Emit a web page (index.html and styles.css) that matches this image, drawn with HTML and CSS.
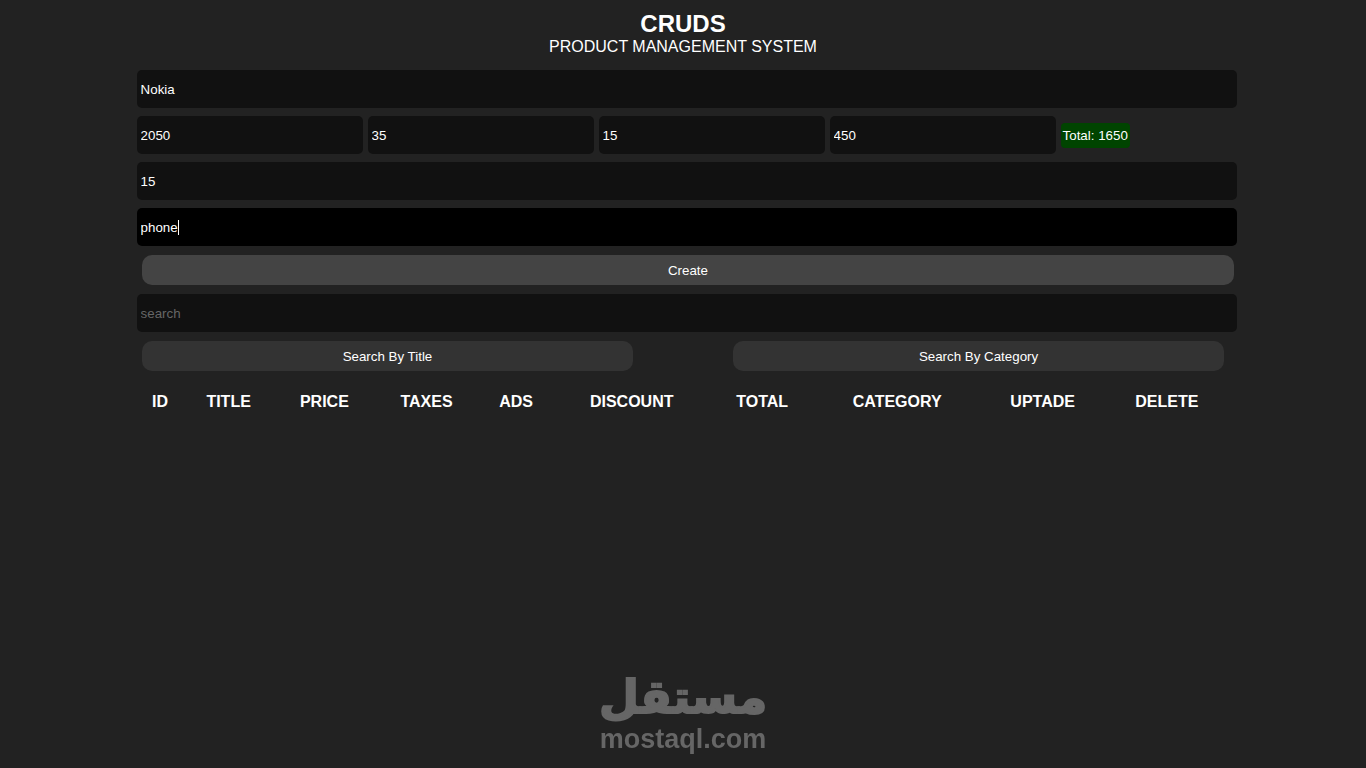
FILE: index.html
```html
<!DOCTYPE html>
<html lang="en">
<head>
    <meta charset="UTF-8">
    <meta name="viewport" content="width=device-width, initial-scale=1.0">
    <title>CRUDS</title>
    <link rel="stylesheet" href="styles.css">
</head>
<body>
    <div class="crud">
        <header class="head">
            <h1>CRUDS</h1>
            <p>PRODUCT MANAGEMENT SYSTEM</p>
        </header>

        <div class="inputs">
            <input type="text" id="title" placeholder="title" aria-label="title" value="Nokia">
            <div class="price">
                <input type="text" inputmode="numeric" id="price" placeholder="price" aria-label="price" value="2050">
                <input type="text" inputmode="numeric" id="taxes" placeholder="taxes" aria-label="taxes" value="35">
                <input type="text" inputmode="numeric" id="ads" placeholder="ads" aria-label="ads" value="15">
                <input type="text" inputmode="numeric" id="discount" placeholder="discount" aria-label="discount" value="450">
                <small id="total">Total: 1650</small>
            </div>
            <input type="text" inputmode="numeric" id="count" placeholder="count" aria-label="count" value="15">
            <input type="text" class="caret" id="category" placeholder="category" aria-label="category" value="phone">
            <button class="create" id="submit">Create</button>
        </div>

        <div class="outputs">
            <input type="text" id="search" placeholder="search" aria-label="search">
            <div class="btn-search">
                <button id="searchTitle">Search By Title</button>
                <button id="searchCategory">Search By Category</button>
            </div>
            <table>
                <thead>
                    <tr>
                        <th>ID</th>
                        <th>TITLE</th>
                        <th>PRICE</th>
                        <th>TAXES</th>
                        <th>ADS</th>
                        <th>DISCOUNT</th>
                        <th>TOTAL</th>
                        <th>CATEGORY</th>
                        <th>UPTADE</th>
                        <th>DELETE</th>
                    </tr>
                </thead>
                <tbody id="tbody"></tbody>
            </table>
        </div>
    </div>

    <div class="watermark">
        <span class="watermark-ar" lang="ar" dir="rtl">مستقل</span>
        <span class="watermark-en">mostaql.com</span>
    </div>

    <script>
        let category = document.getElementById('category');
        category.focus();
        category.setSelectionRange(category.value.length, category.value.length);

        // back to the normal caret once the user types
        category.addEventListener('input', function() {
            category.classList.remove('caret');
        });
    </script>
</body>
</html>
```
FILE: styles.css
```css
body {
    margin: 0;
    background: #222;
    color: #fff;
    font-family: "Liberation Sans", Arial, sans-serif;
}

.crud {
    width: 80%;
    margin: 0 auto;
}

.head {
    padding: 10px 0 6px;
    text-align: center;
}

.head h1 {
    margin: 0;
    font-size: 24px;
    line-height: 28px;
}

.head p {
    margin: 0;
    line-height: 18px;
}

input {
    width: 100%;
    height: 30px;
    margin: 8px 0;
    padding: 4px;
    border: none;
    outline: none;
    border-radius: 5px;
    background: #111;
    color: #fff;
    font-family: inherit;
    display: block;
}

input:focus {
    background: #000;
}

/* steady caret after the initial value */
.caret:focus {
    caret-color: transparent;
    background: linear-gradient(#fff, #fff) 41px center / 1px 15px no-repeat #000;
}

input::placeholder {
    color: #666;
}

.price {
    margin: 8px 0;
    white-space: nowrap;
}

.price input {
    width: 20%;
    margin: 0;
    display: inline-block;
    vertical-align: middle;
}

#total {
    display: inline-block;
    vertical-align: middle;
    padding: 5px 2px;
    border-radius: 4px;
    background: #040;
    line-height: 15px;
}

button {
    height: 30px;
    border: none;
    border-radius: 10px;
    background: #333;
    color: #fff;
    font-family: inherit;
    cursor: pointer;
}

button:hover,
.create {
    background: #444;
}

.create {
    display: block;
    width: 100%;
    margin: 9px 5px;
}

.btn-search {
    display: flex;
    justify-content: space-between;
    margin: 9px 0;
}

.btn-search button {
    width: 45%;
    margin: 0 5px;
}

table {
    width: 100%;
    margin: 15px 0;
    text-align: center;
}

th {
    padding: 5px;
}

/* site mark pinned over the bottom of the page */
.watermark {
    position: fixed;
    left: 50%;
    bottom: 13px;
    transform: translateX(-50%);
    display: flex;
    flex-direction: column;
    align-items: center;
    color: #666;
    font-weight: bold;
    pointer-events: none;
}

.watermark-ar {
    font-family: "DejaVu Sans", sans-serif;
    font-size: 46px;
    line-height: 54px;
    -webkit-text-stroke: 2px #666;
}

.watermark-en {
    font-size: 27px;
    line-height: 31px;
}
```
